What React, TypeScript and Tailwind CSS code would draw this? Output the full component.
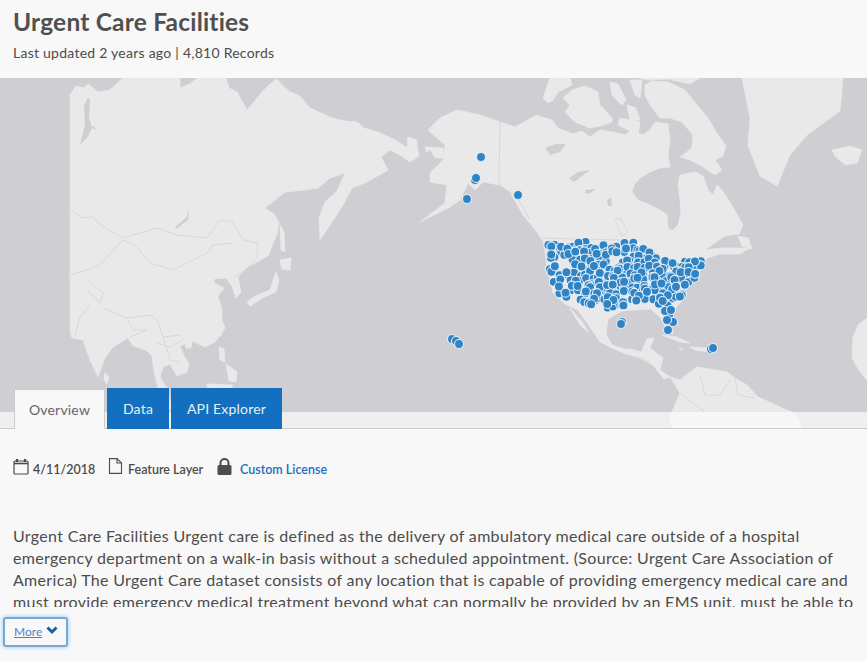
import React from "react";

const LAND = "#e9e9ea";
const LINE = "#d6d6d9";
const WATER = "#cfced3";

const lands = [
  "M70 95L76 86L84 88L88 84L98 92L110 90L116 84L123 78L180 78L180 88L190 84L197 78L226 78L229 88L237 92L247 110L253 103L262 92L270 84L277 79L281 84L290 92L300 96L310 108L332 118L345 121L357 122L364 128L378 132L395 140L408 148L417 146L419 156L410 162L400 155L390 150L381 157L388 170L367 182L352 188L343 205L330 225L320 240L319 218L325 202L337 191L345 173L330 178L318 188L305 190L285 192L265 208L274 214L279 222L277 234L268 256L257 262L246 268L238 277L241 292L236 298L232 286L226 278L214 279L214 283L224 288L218 296L222 310L222 320L225 328L215 342L205 347L192 341L180 346L184 356L189 364L187 372L177 376L170 364L163 367L160 377L168 390L172 412L160 396L154 372L152 356L146 350L133 346L128 338L113 347L105 358L98 377L90 360L83 340L72 338L70 330Z",
  "M428 130L440 118L457 110L480 115L500 122L515 127L533 117L537 115L545 118L552 120L558 128L573 134L582 131L590 137L600 130L613 132L625 135L632 130L643 135L650 130L655 122L668 124L670 140L668 155L670 167L660 168L650 172L640 178L634 185L632 192L638 200L650 205L660 210L667 215L668 228L672 231L678 225L681 212L680 200L678 185L680 175L695 172L703 176L708 190L713 195L717 185L722 190L733 207L743 225L739 234L725 236L716 242L705 250L722 248L750 248L740 254L720 254L707 258L703 266L695 278L685 292L681 302L672 312L669 322L673 334L668 333L661 318L651 309L636 310L622 311L608 319L606 334L612 345L625 349L630 349L642 352L644 345L647 339L654 338L650 348L663 358L660 370L670 377L664 379L653 365L640 358L628 355L612 348L600 342L590 327L578 310L565 304L553 293L547 268L544 243L537 232L523 215L510 192L500 185L483 182L475 190L468 183L460 200L450 207L420 222L445 203L447 185L430 182L430 173L443 160L445 145L437 138Z",
  "M645 85L652 81L668 82L685 90L697 105L708 118L716 132L726 146L723 156L715 160L722 170L715 175L700 165L690 160L680 157L692 148L693 135L682 122L670 118L660 118L650 105L645 95Z",
  "M563 98L572 90L585 86L598 92L600 105L612 118L612 122L600 126L590 128L575 122L565 112L570 105Z",
  "M543 98L550 78L570 78L572 85L558 92L553 100L548 103Z",
  "M610 82L618 84L626 100L622 105L612 95ZM630 80L642 80L640 98L635 95ZM627 105L636 108L640 120L630 120ZM620 118L640 122L638 135L628 130L618 125ZM640 78L700 78L690 84L668 79L648 80ZM690 175L696 172L699 174L692 178Z",
  "M742 78L843 78L840 111L807 135L790 155L777 186L760 176L748 145L750 118Z",
  "M832 150L850 146L862 150L857 163L845 165L835 156Z",
  "M738 236L748 238L752 249L742 246Z",
  "M425 147L443 148L443 158L428 157Z",
  "M570 308L583 323L589 333L580 325Z",
  "M280 260L291 258L290 270L282 269ZM247 302L255 296L270 290L276 272L279 280L276 292L262 298L250 306Z",
  "M280 225L284 232L285 252L281 250Z",
  "M220 327L223 332L220 337L218 333ZM185 342L192 342L191 348L186 348ZM105 373L109 377L107 384L104 380Z",
  "M219 347L224 349L225 362L220 360ZM226 364L237 372L236 382L229 381ZM207 384L233 385L230 390L208 390Z",
  "M662 335L677 337L690 343L680 342ZM690 347L706 348L710 352L695 350ZM679 348L683 349L682 350Z",
  "M670 377L680 380L690 372L697 367L710 369L727 372L738 380L747 385L758 397L787 410L792 412L672 412L680 393Z",
  "M867 318L858 325L853 337L852 358L860 372L867 380Z",
  "M408 137L417 140L417 150L407 148Z",
];

const waters = [
  "M88 97L84 106L85 125L80 145L87 138L93 126L98 130L92 128L89 118L90 100Z",
  "M189 209L186 218L175 227L176 229L188 220Z",
  "M545 148L556 144L566 144L560 152L550 155Z",
  "M569 178L578 172L590 170L582 176L574 182Z",
  "M607 200L611 197L612 206L608 206Z",
  "M585 190L595 189L591 193L586 194Z",
  "M430 150L424 154L428 160L436 160Z",
];

const borders = [
  "M70 210L83 218L93 217L103 227L123 238L157 228L177 235L207 238L220 220L233 222L243 240L258 243L257 257L248 268L233 278",
  "M123 240L135 245L150 263L173 270L207 253L213 245L233 243",
  "M123 240L107 257L100 265L77 273L70 275",
  "M87 280L103 293L100 303L87 290",
  "M103 308L127 318L150 315L157 320L163 337L180 335",
  "M127 318L133 330L147 330L130 337",
  "M90 305L80 317L75 337",
  "M157 343L170 347L183 340",
  "M163 337L170 360L180 362",
  "M500 122L499 185",
  "M540 238L620 240L640 250",
  "M500 185L517 197L530 220",
  "M615 220L620 218L628 232L622 236Z",
  "M680 393L695 405L705 412M700 375L705 395L720 395L730 380M735 378L738 395L755 398",
  "M628 355L642 358L650 362",
];

function mulberry(seed: number) {
  return () => {
    seed |= 0;
    seed = (seed + 0x6d2b79f5) | 0;
    let t = Math.imul(seed ^ (seed >>> 15), 1 | seed);
    t = (t + Math.imul(t ^ (t >>> 7), 61 | t)) ^ t;
    return ((t ^ (t >>> 14)) >>> 0) / 4294967296;
  };
}

const usPoly: [number, number][] = [
  [548, 242], [600, 241], [640, 242], [655, 257], [672, 263], [690, 261], [705, 257], [701, 268], [691, 284],
  [683, 297], [672, 306], [652, 304], [630, 303], [612, 310], [600, 308], [588, 303], [568, 299], [554, 290], [548, 268],
];
const holes: [number, number, number][] = [
  [562, 265, 7], [613, 259, 7], [563, 283, 4], [596, 243, 6], [650, 245, 6], [670, 252, 9], [575, 297, 4],
];
function inside(x: number, y: number) {
  let c = false;
  for (let i = 0, j = usPoly.length - 1; i < usPoly.length; j = i++) {
    const [xi, yi] = usPoly[i];
    const [xj, yj] = usPoly[j];
    if (yi > y !== yj > y && x < ((xj - xi) * (y - yi)) / (yj - yi) + xi) c = !c;
  }
  return c && !holes.some(([a, b, r]) => Math.hypot(x - a, y - b) < r);
}

const dots: [number, number][] = [];
const rnd = mulberry(11);
for (let pass = 0; pass < 2; pass++) {
  for (let y = 238; y < 314; y += 6.5) {
    for (let x = 544; x < 710; x += 6.5) {
      const px = x + rnd() * 6;
      const py = y + rnd() * 6;
      if (inside(px, py) && (pass === 0 || rnd() > 0.4)) dots.push([px, py]);
    }
  }
}
const extra: [number, number][] = [
  [481, 157], [475, 180], [476, 178], [467, 199], [518, 195], [452, 339], [456, 341], [459, 344],
  [711, 349], [713, 348], [622, 322], [621, 324], [669, 316], [673, 322], [667, 320], [668, 330], [665, 311], [671, 310],
];

function MapArt() {
  return (
    <svg viewBox="0 78 867 351" width="867" height="351" className="block">
      <rect x="0" y="78" width="867" height="351" fill={WATER} />
      <g className="blur-[0.4px]">
        {lands.map((d, i) => (
          <path key={i} d={d} fill={LAND} stroke={LAND} strokeWidth="0.8" strokeLinejoin="round" />
        ))}
        {waters.map((d, i) => (
          <path key={i} d={d} fill={WATER} />
        ))}
        {borders.map((d, i) => (
          <path key={i} d={d} fill="none" stroke={LINE} strokeWidth="0.9" />
        ))}
      </g>
      <rect x="0" y="412" width="867" height="17" fill="#efeff0" />
      <path d="M671 412L792 412Q802 418 801 428L672 428Q668 420 671 412Z" fill="#f7f7f7" />
      <rect x="0" y="428" width="867" height="1" fill="#cccccc" />
      {[...dots, ...extra].map(([x, y], i) => (
        <circle key={i} cx={x} cy={y} r="4.5" fill="#2f84c5" stroke="#e6eef5" strokeWidth="1.1" />
      ))}
    </svg>
  );
}

function Calendar() {
  return (
    <svg width="16" height="17" viewBox="0 0 16 17" fill="none" stroke="#4c4c4c" strokeWidth="1.2" className="shrink-0">
      <rect x="1" y="3" width="14" height="13" rx="1" />
      <path d="M1 5.5H15" strokeWidth="1.6" />
      <path d="M4 1V4M12 1V4" strokeWidth="2.2" />
    </svg>
  );
}
function Doc() {
  return (
    <svg width="15" height="16" viewBox="0 0 15 16" fill="none" stroke="#4c4c4c" strokeWidth="1.1" className="shrink-0">
      <path d="M1.5 .6H9L13.5 5V15.4H1.5Z" />
      <path d="M9 .6V5H13.5" />
    </svg>
  );
}
function Lock() {
  return (
    <svg width="15" height="17" viewBox="0 0 15 17" className="shrink-0">
      <path d="M3.5 8V5a4 4 0 0 1 8 0V8" fill="none" stroke="#4c4c4c" strokeWidth="2" />
      <rect x=".5" y="7" width="14" height="10" rx="1.5" fill="#4c4c4c" />
    </svg>
  );
}

const font = { fontFamily: "Lato, 'Noto Sans', sans-serif" };

export default function App() {
  return (
    <div className="w-[867px] h-[661px] overflow-hidden bg-[#f8f8f8] text-[#4c4c4c]" style={font}>
      <header className="h-[78px] pl-[13px] pt-[6px]">
        <h1 className="text-[24.5px] leading-[32px] font-bold tracking-[0.2px] text-[#505050]">Urgent Care Facilities</h1>
        <p className="mt-[5px] text-[14px] leading-[20px] tracking-[0.25px]">Last updated 2 years ago | 4,810 Records</p>
      </header>

      <MapArt />

      <nav className="flex -mt-[41px] ml-[14px] h-[41px] items-end relative">
        <div className="w-[91px] h-[40px] pb-[1px] mr-[2px] bg-[#f8f8f8] border border-b-0 border-[#cccccc] flex items-center justify-center text-[14px] text-[#666666] tracking-[0.2px]">Overview</div>
        <div className="w-[62px] h-[41px] mr-[2px] bg-[#136fbf] text-[#e8f0f8] flex items-center justify-center text-[14px] tracking-[0.2px]">Data</div>
        <div className="w-[111px] h-[41px] bg-[#136fbf] text-[#e8f0f8] flex items-center justify-center text-[14px] tracking-[0.2px]">API Explorer</div>
      </nav>

      <div className="flex items-start h-[20px] mt-[29px] ml-[13px] text-[12.5px] font-semibold leading-[16px]">
        <Calendar />
        <span className="ml-[4px] w-[75px] pt-[4px]">4/11/2018</span>
        <Doc />
        <span className="ml-[5px] w-[89px] pt-[4px]">Feature Layer</span>
        <Lock />
        <span className="ml-[8px] pt-[4px] text-[#196fc1]">Custom License</span>
      </div>

      <div className="mt-[47px] ml-[13px] h-[82px] overflow-hidden text-[16px] leading-[22px] tracking-[0.32px] whitespace-nowrap">
        <div>Urgent Care Facilities Urgent care is defined as the delivery of ambulatory medical care outside of a hospital</div>
        <div>emergency department on a walk-in basis without a scheduled appointment. (Source: Urgent Care Association of</div>
        <div>America) The Urgent Care dataset consists of any location that is capable of providing emergency medical care and</div>
        <div>must provide emergency medical treatment beyond what can normally be provided by an EMS unit, must be able to</div>
      </div>

      <button className="mt-[10px] ml-[3px] w-[65px] h-[30px] flex items-center pl-[9px] border-2 border-[#74a8d8] rounded-[3px] bg-[#f8f8f8] shadow-[0_0_4px_#8fc0ea] text-[12px] text-[#5a7ec8]">
        <span className="underline">More</span>
        <svg width="12" height="9" viewBox="0 0 12 9" className="ml-[4px] -mt-[3px]">
          <path d="M1.5 1.5L6 6L10.5 1.5" fill="none" stroke="#1a5fa8" strokeWidth="3" />
        </svg>
      </button>
    </div>
  );
}
